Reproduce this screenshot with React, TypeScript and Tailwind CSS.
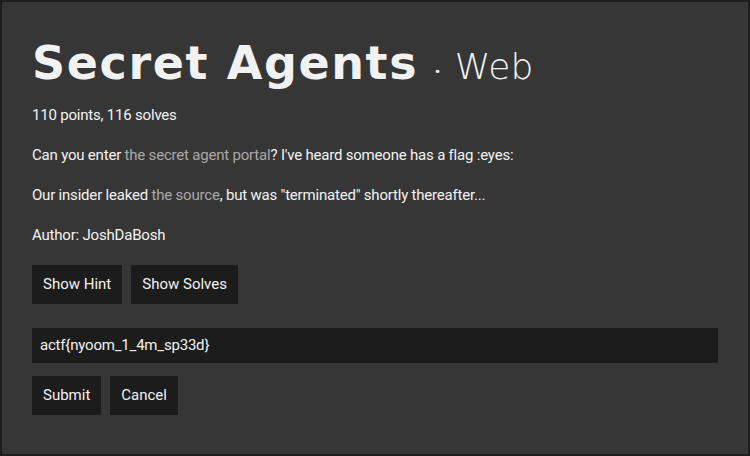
export default function App() {
  return (
    <div className="w-[750px] h-[456px] bg-[#1e1e1e] p-[2px] overflow-hidden">
      <div className="h-full w-full bg-[#363636] px-[30px] pt-[38px] text-[#f2f2f2] font-['Roboto',sans-serif]">
        <h1 className="flex items-baseline leading-none">
          <span className="font-['DejaVu_Sans',sans-serif] font-bold text-[46px] tracking-[1.6px]">Secret Agents</span>
          <span className="ml-[16px] text-[22px] font-bold">·</span>
          <span className="ml-[14px] font-['DejaVu_Sans',sans-serif] text-[36px] font-light">Web</span>
        </h1>
        <p className="mt-[17px] text-[15px] leading-6 tracking-[-0.2px]">110 points, 116 solves</p>
        <p className="mt-[16px] text-[15px] leading-6 tracking-[-0.2px]">
          Can you enter <a className="text-[#a9a9a9]">the secret agent portal</a>? I've heard someone has a flag :eyes:
        </p>
        <p className="mt-[16px] text-[15px] leading-6 tracking-[-0.2px]">
          Our insider leaked <a className="text-[#a9a9a9]">the source</a>, but was "terminated" shortly thereafter...
        </p>
        <p className="mt-[16px] text-[15px] leading-6 tracking-[-0.2px]">Author: JoshDaBosh</p>
        <div className="mt-[18px] flex gap-[9px]">
          <button className="h-[39px] px-[11px] bg-[#1c1c1c] text-[15px]">Show Hint</button>
          <button className="h-[39px] px-[11px] bg-[#1c1c1c] text-[15px]">Show Solves</button>
        </div>
        <div className="mt-[24px] h-[35px] w-[686px] bg-[#1c1c1c] flex items-center px-[8px] text-[15px] tracking-[-0.2px]">
          actf{"{"}nyoom_1_4m_sp33d{"}"}
        </div>
        <div className="mt-[13px] flex gap-[9px]">
          <button className="h-[39px] px-[11px] bg-[#1c1c1c] text-[15px]">Submit</button>
          <button className="h-[39px] px-[11px] bg-[#1c1c1c] text-[15px]">Cancel</button>
        </div>
      </div>
    </div>
  );
}
